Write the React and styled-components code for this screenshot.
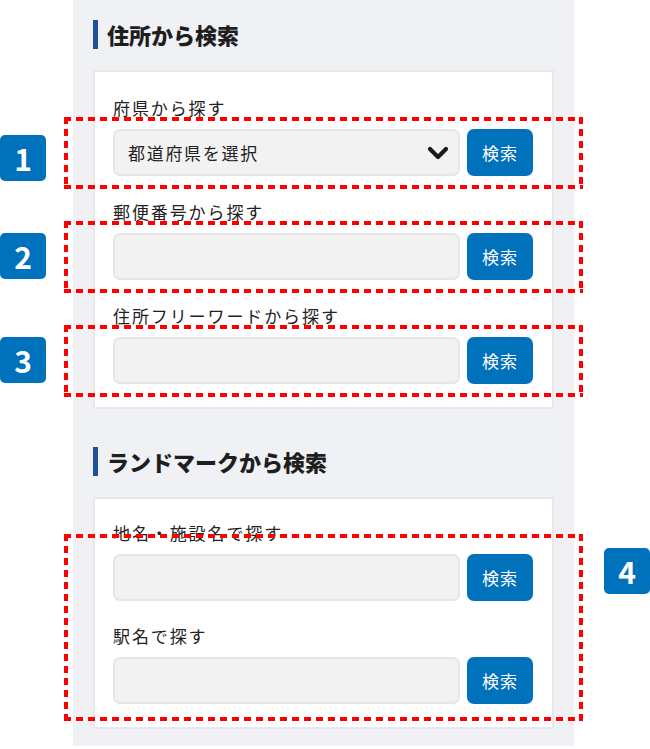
import { createGlobalStyle, styled, css } from "styled-components";

const GlobalStyle = createGlobalStyle`
  * { box-sizing: border-box; }
  body {
    margin: 0;
    background: #ffffff;
    font-family: "Noto Sans CJK JP", "Noto Sans", sans-serif;
    color: #222222;
  }
`;

const sections = [
  {
    title: "住所から検索",
    groups: [
      { label: "府県から探す", select: "都道府県を選択", badge: 1, badgeTop: 6 },
      { label: "郵便番号から探す", badge: 2, badgeTop: 0 },
      { label: "住所フリーワードから探す", badge: 3, badgeTop: 0 },
    ],
  },
  {
    title: "ランドマークから検索",
    wrapBadge: 4,
    groups: [{ label: "地名・施設名で探す" }, { label: "駅名で探す" }],
  },
];

function Chevron() {
  return (
    <svg width="22" height="14" viewBox="0 0 22 14">
      <polyline
        points="3,3 11,11 19,3"
        fill="none"
        stroke="#1a1a1a"
        strokeWidth="4.2"
        strokeLinecap="round"
        strokeLinejoin="round"
      />
    </svg>
  );
}

function FieldRow({ group }) {
  return (
    <Row>
      {group.select ? (
        <SelectBox>
          <span>{group.select}</span>
          <Chevron />
        </SelectBox>
      ) : (
        <TextInput type="text" />
      )}
      <SearchButton type="button">検索</SearchButton>
    </Row>
  );
}

export default function App() {
  return (
    <>
      <GlobalStyle />
      <Page>
        <Panel>
          {sections.map((section, si) => {
            const groups = section.groups.map((group) => (
              <Group key={group.label}>
                <Label>{group.label}</Label>
                {group.badge ? (
                  <Marked>
                    <FieldRow group={group} />
                    <Badge $top={group.badgeTop}>{group.badge}</Badge>
                  </Marked>
                ) : (
                  <FieldRow group={group} />
                )}
              </Group>
            ));
            return (
              <Section key={section.title} $first={si === 0}>
                <Heading>{section.title}</Heading>
                <Card $compact={!!section.wrapBadge}>
                  {section.wrapBadge ? (
                    <MarkedArea>
                      {groups}
                      <Badge $right>{section.wrapBadge}</Badge>
                    </MarkedArea>
                  ) : (
                    <Groups>{groups}</Groups>
                  )}
                </Card>
              </Section>
            );
          })}
        </Panel>
      </Page>
    </>
  );
}

// Styles
const dashedFrame = css`
  content: "";
  position: absolute;
  pointer-events: none;
  background:
    repeating-linear-gradient(90deg, #ff0000 0 7px, transparent 7px 12px) top left / 100% 4px no-repeat,
    repeating-linear-gradient(90deg, #ff0000 0 7px, transparent 7px 12px) bottom left / 100% 4px no-repeat,
    repeating-linear-gradient(180deg, #ff0000 0 7px, transparent 7px 12px) top left / 4px 100% no-repeat,
    repeating-linear-gradient(180deg, #ff0000 0 7px, transparent 7px 12px) top right / 4px 100% no-repeat;
`;

const Page = styled.div`
  width: 650px;
  min-height: 749px;
  position: relative;
`;

const Panel = styled.div`
  margin-left: 73px;
  width: 501px;
  background: #f0f1f5;
  padding: 20px 20px 17px;
`;

const Section = styled.section`
  margin-top: ${(p) => (p.$first ? "0" : "38px")};
`;

const Heading = styled.h2`
  margin: 0 0 21px;
  height: 29px;
  line-height: 29px;
  border-left: 5px solid #1f4f9f;
  padding-left: 9px;
  font-size: 22px;
  font-weight: 900;
  color: #1e1e1e;
  letter-spacing: 0;
`;

const Card = styled.div`
  width: 461px;
  background: #ffffff;
  border: 2px solid #e8e8ea;
  padding: ${(p) => (p.$compact ? "22px" : "24px")} 19px 23px 18px;
`;

const Groups = styled.div`
  display: flex;
  flex-direction: column;
  gap: 24px;
`;

const MarkedArea = styled(Groups)`
  position: relative;
  gap: 23px;
  &::after {
    ${dashedFrame}
    top: 13px;
    bottom: -17px;
    left: -49px;
    right: -50px;
  }
`;

const Group = styled.div`
  display: flex;
  flex-direction: column;
`;

const Label = styled.div`
  font-size: 17px;
  line-height: 24px;
  letter-spacing: 1.9px;
  color: #222222;
  margin-bottom: 9px;
`;

const Marked = styled.div`
  position: relative;
  &::after {
    ${dashedFrame}
    top: -12px;
    bottom: -13px;
    left: -49px;
    right: -50px;
  }
`;

const Row = styled.div`
  display: flex;
  gap: 7px;
  height: 47px;
`;

const fieldBase = css`
  flex: 1;
  height: 47px;
  border: 2px solid #e6e6e6;
  border-radius: 7px;
  background: #f2f2f2;
`;

const SelectBox = styled.div`
  ${fieldBase}
  display: flex;
  align-items: center;
  justify-content: space-between;
  padding: 0 9px 0 13px;
  font-size: 17px;
  letter-spacing: 1.7px;
  color: #222222;
  svg {
    display: block;
  }
`;

const TextInput = styled.input`
  ${fieldBase}
  min-width: 0;
  padding: 0 13px;
  font-family: inherit;
  font-size: 16px;
  &:focus {
    outline: none;
  }
`;

const SearchButton = styled.button`
  width: 66px;
  height: 47px;
  border: none;
  border-radius: 7px;
  background: #0071bb;
  color: #ffffff;
  font-family: inherit;
  font-size: 17px;
  letter-spacing: 1px;
  padding: 0;
  cursor: pointer;
`;

const Badge = styled.div`
  position: absolute;
  top: ${(p) => (p.$right ? "27px" : `${p.$top}px`)};
  ${(p) => (p.$right ? "right: -117px;" : "left: -113px;")}
  width: 46px;
  height: 46px;
  border-radius: 5px;
  background: #0071bb;
  color: #ffffff;
  display: flex;
  align-items: center;
  justify-content: center;
  font-size: 30px;
  font-weight: 700;
  line-height: 1;
`;
